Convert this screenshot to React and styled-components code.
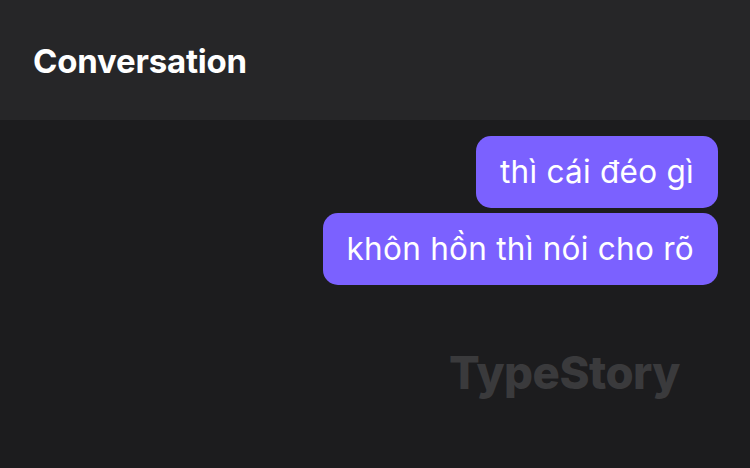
import React from "react";
import styled, { createGlobalStyle } from "styled-components";

const Global = createGlobalStyle`
  html, body { margin: 0; padding: 0; background: #1c1c1e; }
  body { font-family: Inter, "Noto Sans", sans-serif; }
`;

const Page = styled.div`
  position: relative;
  width: 750px;
  height: 468px;
  background: #1c1c1e;
  overflow: hidden;
`;

const Header = styled.header`
  height: 120px;
  background: #262628;
  display: flex;
  align-items: center;
  padding: 0 33px;
  box-sizing: border-box;
`;

const Title = styled.h1`
  margin: 0;
  font-family: Inter, "Noto Sans", sans-serif;
  font-weight: 700;
  font-size: 33px;
  color: #ffffff;
  letter-spacing: -0.2px;
  padding-top: 2px;
`;

const Messages = styled.div`
  display: flex;
  flex-direction: column;
  align-items: flex-end;
  gap: 5px;
  padding: 16px 32px 0 0;
`;

const Bubble = styled.div`
  background: #7b61ff;
  color: #ffffff;
  font-family: Inter, "Noto Sans", sans-serif;
  font-size: 31.5px;
  line-height: 38px;
  letter-spacing: 0.27px;
  padding: 17px 24px 17px 24px;
  border-radius: 15px;
  white-space: nowrap;
`;

const Watermark = styled.div`
  position: absolute;
  left: 449px;
  top: 345px;
  font-family: Inter, "Noto Sans", sans-serif;
  font-weight: 800;
  font-size: 45.5px;
  letter-spacing: -0.5px;
  color: #3a3a3c;
`;

export default function App() {
  return (
    <Page>
      <Global />
      <Header>
        <Title>Conversation</Title>
      </Header>
      <Messages>
        <Bubble>thì cái đéo gì</Bubble>
        <Bubble>khôn hồn thì nói cho rõ</Bubble>
      </Messages>
      <Watermark>TypeStory</Watermark>
    </Page>
  );
}
